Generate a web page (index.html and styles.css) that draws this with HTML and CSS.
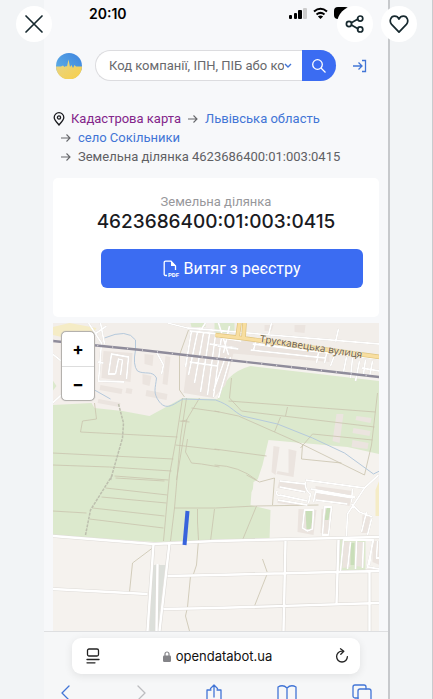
FILE: index.html
```html
<!DOCTYPE html>
<html lang="uk">
<head>
    <meta charset="UTF-8">
    <meta name="viewport" content="width=device-width, initial-scale=1.0">
    <title>Земельна ділянка 4623686400:01:003:0415</title>
    <link rel="stylesheet" href="styles.css">
</head>
<body>
<div class="viewer-actions">
    <button class="round-button" aria-label="Закрити">
        <svg width="20" height="20" viewBox="0 0 20 20"><path d="M2 2 18 18M18 2 2 18"/></svg>
    </button>
    <div class="viewer-right">
        <button class="round-button" aria-label="Поділитися">
            <svg width="20" height="20" viewBox="0 0 20 20"><path d="m6.4 8.8 6.6-3.7M6.4 11l6.6 3.8"/><circle cx="4" cy="10" r="2.6"/><circle cx="15.2" cy="4.6" r="2.6"/><circle cx="15.2" cy="15.4" r="2.6"/></svg>
        </button>
        <button class="round-button" aria-label="Зберегти">
            <svg width="20" height="20" viewBox="0 0 20 20"><path d="M10 18.2 2.6 10.4C-.2 7 1.8 2.2 5.6 2.2c2.200 0 3.600 1.200 4.400 2.900.8-1.700 2.200-2.900 4.400-2.900 3.800 0 5.800 4.800 3 8.200Z"/></svg>
        </button>
    </div>
</div>

<div class="phone">
    <div class="status-bar">
        <span class="time">20:10</span>
        <svg class="status-icons" width="60" height="12" viewBox="0 0 60 12">
            <rect x="0" y="8" width="3" height="4" rx="1"/>
            <rect x="5" y="6" width="3" height="6" rx="1"/>
            <rect x="9" y="3" width="4" height="9" rx="1"/>
            <rect class="faded" x="14" y="1" width="4" height="11" rx="1"/>
            <path class="wave" d="M25 4.500q6.500-5.500 13 0M27.500 7.500q4-3.300 8 0"/>
            <path d="m28.900 9.400 2.600 2.600 2.600-2.600q-2.600-1.900-5.200 0Z"/>
            <rect x="45" y="0" width="15" height="12" rx="4"/>
        </svg>
    </div>

    <header class="site-header">
        <a class="logo" href="#" aria-label="Opendatabot">
            <svg width="26" height="26" viewBox="0 0 26 26">
                <defs>
                    <linearGradient id="sky" x1="0" y1="1" x2="1" y2="0"><stop offset="0" stop-color="#64b6e6"/><stop offset="1" stop-color="#3d83df"/></linearGradient>
                    <linearGradient id="field" x1="0" y1="0" x2="1" y2="1"><stop offset="0" stop-color="#e5d58d"/><stop offset="1" stop-color="#f9cf47"/></linearGradient>
                </defs>
                <circle cx="13" cy="13" r="13" fill="url(#sky)"/>
                <path d="M0 13.500h5l2-1 1.500 1.500 1.500-1 1 .5 1.500-7 1.500 7.500 1.500-2 1.500 3 1.500-3 1.500 1.500H26a13 13 0 0 1-26 0Z" fill="url(#field)"/>
            </svg>
        </a>
        <form class="search">
            <input class="search-input" type="text" aria-label="Пошук" placeholder="Код компанії, ІПН, ПІБ або код">
            <svg class="chevron" width="8" height="6" viewBox="0 0 8 6"><path d="m1 1 3 3 3-3"/></svg>
            <button class="search-button" type="button" aria-label="Шукати">
                <svg width="16" height="16" viewBox="0 0 16 16"><circle cx="6.500" cy="6.500" r="4.800"/><path d="m10 10 4.500 4.500"/></svg>
            </button>
        </form>
        <a class="login" href="#" aria-label="Увійти">
            <svg width="16" height="14" viewBox="0 0 16 14"><path d="M1 7h9M6.500 3.500 10 7l-3.500 3.500M10 1.500h3.500v11H10"/></svg>
        </a>
    </header>

    <nav class="breadcrumbs" aria-label="Навігація">
        <div class="crumb-row">
            <svg class="pin" width="12" height="14" viewBox="0 0 12 14"><path d="M6 13C3.500 10 1.200 7.800 1.200 5.500a4.800 4.800 0 0 1 9.600 0C10.800 7.800 8.500 10 6 13Z"/><circle cx="6" cy="5.500" r="1.600"/></svg>
            <a class="visited" href="#">Кадастрова карта</a>
            <svg class="arrow" width="10" height="10" viewBox="0 0 10 10"><path d="M0 5h9M5.500 1.500 9 5 5.500 8.500"/></svg>
            <a href="#">Львівська область</a>
        </div>
        <div class="crumb-row nested">
            <svg class="arrow" width="10" height="10" viewBox="0 0 10 10"><path d="M0 5h9M5.500 1.500 9 5 5.500 8.500"/></svg>
            <a href="#">село Сокільники</a>
        </div>
        <div class="crumb-row nested">
            <svg class="arrow" width="10" height="10" viewBox="0 0 10 10"><path d="M0 5h9M5.500 1.500 9 5 5.500 8.500"/></svg>
            <span>Земельна ділянка 4623686400:01:003:0415</span>
        </div>
    </nav>

    <main>
        <section class="card">
            <p class="card-label">Земельна ділянка</p>
            <h1>4623686400:01:003:0415</h1>
            <button class="extract-button">
                <svg width="17" height="18" viewBox="0 0 17 18"><path class="sheet" d="M4 15.500H2.500A1.300 1.300 0 0 1 1.200 14V2.500A1.300 1.300 0 0 1 2.500 1.200H8L12.500 6v4"/><path class="fold" d="M8 1v5h5Z"/><text x="5" y="17">PDF</text></svg>
                Витяг з реєстру
            </button>
        </section>

        <section class="map">
            <svg class="map-canvas" viewBox="53 323 327 308" preserveAspectRatio="xMidYMid slice">
                <rect x="53" y="323" width="327" height="308" fill="#f5f2ee"/>
                <path d="M53 323H380V378L53 340Z" fill="#f2eeea"/>
                <path d="M53 340 190 356 183 398 150 416 95 408 53 405Z" fill="#f4efeb"/>
                <path d="M53 327 70 323 97 328 94 333 62 337 53 335Z" fill="#f5ecc6"/>

                <!-- fields -->
                <g fill="#dce9cd">
                    <path d="M53 405 92 403 95 408 123 411 150 416 183 398 218 399Q225 373 251 366L380 381V454L348 447 325 445 269 440 263 465 258 480 252 492 251 505 271 510 270 540 216 541 155 542 53 535Z"/>
                    <path d="M53 380 57 386 53 391ZM191 323H206V327H192ZM215 323H235V333H215Z"/>
                    <path d="M340 538H366V572L340 571Z"/>
                </g>
                <path d="M254 482 262 477 275 479 272 506 252 504Z" fill="#f5f2ee"/>

                <!-- built-up blocks -->
                <g fill="#ebe4df">
                    <path d="M104 351 133 353 131 382 102 378ZM145 354 154 355 153 366 145 364ZM166 356 171 357 168 385 163 384ZM101 385 123 389 122 394 100 390ZM127 388 133 389 132 394 126 393ZM147 390 168 394 167 400 146 396ZM99 399 121 403 120 407 98 403ZM143 374 152 376 150 386 143 384Z"/>
                    <path d="M192 331 220 333 214 398 184 393ZM220 334 238 337 226 385 214 398ZM265 325 274 325 272 331 265 331ZM295 325 306 325 305 333 295 332ZM218 338 258 342 330 352 330 362 216 352Z"/>
                    <path d="M337 414 344 414 340 443 333 441ZM357 416 372 418 371 423 356 420ZM354 428 371 431 370 436 353 433ZM353 440 369 443 368 449 352 447Z"/>
                    <path d="M274 446 280 447 276 475 272 472ZM289 449 297 451 294 477 277 474 278 471 289 473ZM280 480 307 484 306 493 278 488ZM316 486 353 491 350 506 316 500ZM299 509 317 510 314 535 298 532ZM322 509 333 510 330 534 321 533ZM363 515 371 517 368 533 362 533Z"/>
                    <path d="M343 542 351 541 351 567 343 568ZM357 542 364 542 364 567 356 566ZM373 541 380 541 380 565 373 562ZM278 499 300 503 299 506 278 503Z"/>
                </g>
                <path d="M306 511H313V520L311 529H307ZM327 508H331L329 520H325ZM351 543H355V565H351Z" fill="#c9deb9"/>
                <path d="M153 565 166 565 158 631H150Z" fill="#dcdfda"/>
                <path d="M376 490 380 480V516H376Z" fill="#f5ecc6"/>

                <!-- thin parcel borders and paths -->
                <g class="parcels">
                    <path d="M95 403 97 419 83 421 81 432 178 437M53 453 113 456 174 459M53 465 110 467 172 471M116 478 165 481"/>
                    <path d="M183 398 177 437 170 475 164 541M187 398 181 438 175 508 171 541M200 398 187 420 177 480M188 420 182 421M176 445 220 450"/>
                    <path d="M188 439 186 452 192 463 202 464 220 467M192 408 220 412M190 422 180 421M53 511 87 513"/>
                    <path d="M115 476 169 480M106 488 168 495M102 497 167 503M93 508 165 516M90 519 164 528"/>
                    <path d="M175 508 216 508 256 506 319 505M198 509 198 522 199 540 197 565 194 574M215 509 211 541M191 576 188 607 186 616 190 631"/>
                    <path d="M232 378 230 398 242 411 375 427M229 401 376 412M288 407 286 416M281 417 275 432M215 411 239 416 300 443 365 475 372 445 378 393M301 448 313 434 373 440M303 445 302 459 342 463M215 449 267 456M215 465Q240 466 257 480M247 475 260 482 275 478 273 505M257 506 243 540M263 559 268 573 255 606"/>
                    <path d="M153 548 133 563 130 592M189 330 180 355 180 390 185 397"/>
                </g>
                <path class="track" d="M119 404 124 423 123 438 111 480 M113 475 91 510 86 535"/>

                <!-- streams -->
                <path class="stream" d="M105 338Q128 328 136 340L136 350Q133 365 138 371C145 375 153 370 157 378 156 388 153 393 160 402 168 412 176 402 184 399L216 400C231 405 233 411 243 416L278 424 313 438 345 453 374 474 380 471M95 390 111 399"/>

                <!-- road casing then fill -->
                <g id="streets">
                    <path class="casing" d="M53 536 154 544 216 541 380 537M53 589 148 594M154 544 148 631M170 543 160 631M168 576 216 575 380 571M164 609 216 608 380 603M286 541 284 631M339 540 337 604M370 572 370 631M158 564 157 631"/>
                    <path class="street" d="M53 536 154 544 216 541 380 537M53 589 148 594M154 544 148 631M170 543 160 631M168 576 216 575 380 571M164 609 216 608 380 603M286 541 284 631M339 540 337 604M370 572 370 631M158 564 157 631"/>
                </g>
                <g class="lanes">
                    <path d="M89 323 102 343 99 381 125 382M101 323 105 344M94 335 107 326M116 374H109L112 354 129 357 127 379M116 374 119 359 123 360 121 375M98 362 104 363M157 352 164 365 162 374M53 354 63 362M53 403 65 392 96 397"/>
                    <path d="M192 331 186 367M198 332 189 375M204 333 195 383M210 334 201 392M216 335 208 395M222 337 214 397M190 331 238 336M190 362 218 366M231 357 219 398M226 357 214 391M210 344 237 348"/>
                    <path d="M168 323 188 328 380 344M202 329 206 323M219 323 229 355M230 326 224 353M218 337 242 341M218 346 239 349M253 344 380 359M251 350 326 358M257 339 254 350M259 344 320 352M272 323 269 335M339 329 336 342M320 347 317 363M328 349 325 363M337 350 331 366M347 357 344 372M353 358 351 378M360 361 356 381M366 360 364 374M373 361 370 377M380 371 362 368"/>
                    <path d="M280 481 306 484M280 487 306 492M280 495 308 501M278 491Q275 494 280 496M278 500 308 505M306 482Q305 490 311 494L309 503M314 502 316 492 354 498M306 480 365 488 379 475M311 489 356 497M316 500 348 504M353 489 352 502M365 488 348 514 347 536M352 504 360 512 373 517M367 512 362 532M372 519 368 535"/>
                    <path d="M305 510H314L313 529 308 531 303 528ZM325 507H332L329 535H323ZM341 571 344 540H374L368 567 380 569M351 542 348 569M357 541 356 569M364 542 363 568M373 541 370 565M378 541 377 558H380"/>
                </g>

                <!-- main road -->
                <path class="main-casing" d="M216 335 242 338 380 357M240 323 238 337M245 323 244 338"/>
                <path class="main-road" d="M216 335 242 338 380 357M240 323 238 337M245 323 244 338"/>

                <path class="railway" d="M53 341 92 345 142 350 220 359 300 368 380 377"/>
                <path class="sleepers" d="M53 341 92 345 142 350 220 359 300 368 380 377"/>

                <path class="selected" d="M188 511 185 545"/>
                <text class="road-label" transform="translate(260 342) rotate(9)">Трускавецька вулиця</text>
            </svg>
            <div class="zoom-control">
                <button class="zoom-button" aria-label="Наблизити">+</button>
                <button class="zoom-button" aria-label="Віддалити">−</button>
            </div>
        </section>
    </main>

    <footer class="browser-bar">
        <div class="address">
            <button class="plain" aria-label="Параметри сторінки">
                <svg width="14" height="16" viewBox="0 0 14 16"><rect x="1.500" y="1" width="11" height="7" rx="1.500"/><path d="M1 11.500h12M1 14.800h8"/></svg>
            </button>
            <span class="domain">
                <svg class="lock" width="8" height="11" viewBox="0 0 8 11"><rect x="0" y="4.500" width="8" height="6.500" rx="1.200"/><path d="M2 5V3a2 2 0 0 1 4 0v2"/></svg>
                opendatabot.ua
            </span>
            <button class="plain" aria-label="Оновити">
                <svg width="14" height="16" viewBox="0 0 14 16"><path d="M7 3.200A5.400 5.400 0 1 0 12.400 8.600M5.500 .8 8.800 3.300 5.800 6.200"/></svg>
            </button>
        </div>
        <div class="toolbar">
            <button class="plain" aria-label="Назад"><svg width="18" height="20" viewBox="0 0 18 20"><path d="M12 2 5 9l7 7"/></svg></button>
            <button class="plain disabled" aria-label="Вперед" disabled><svg width="18" height="20" viewBox="0 0 18 20"><path d="m8 2 7 7-7 7"/></svg></button>
            <button class="plain" aria-label="Надіслати"><svg width="18" height="20" viewBox="0 0 18 20"><path d="M7 6H3v13h14V6h-4M10 13V1M6.500 4.500 10 1l3.500 3.500"/></svg></button>
            <button class="plain" aria-label="Закладки"><svg width="20" height="20" viewBox="0 0 20 20"><path d="M10 4v14M10 4Q6 0 1 3v15q5-3 9 0 4-3 9 0V3q-5-3-9 1"/></svg></button>
            <button class="plain" aria-label="Вкладки"><svg width="20" height="20" viewBox="0 0 20 20"><path d="M6 14H3a2 2 0 0 1-2-2V3a2 2 0 0 1 2-2h9a2 2 0 0 1 2 2v2"/><rect x="6" y="5" width="13" height="13" rx="2"/></svg></button>
        </div>
    </footer>
</div>
</body>
</html>
```
FILE: styles.css
```css
* {
    box-sizing: border-box;
}
body {
    margin: 0;
    height: 100vh;
    overflow: hidden;
    position: relative;
    background-color: #f2f4f6;
    border-right: 1px solid #c9cbce;
    font-family: Roboto, "Liberation Sans", sans-serif;
    color: #1a1b1f;
}
button {
    padding: 0;
    border: 0;
    font-family: inherit;
    cursor: pointer;
}
svg {
    display: block;
    flex: none;
}
a {
    color: #4275d6;
    text-decoration: none;
}
.phone {
    display: flex;
    flex-direction: column;
    margin: 0 42px 0 44px;
    background-color: #f7f8fa;
    border-right: 2px solid #c7c9cc;
}

/* buttons floating over the page */
.viewer-actions {
    position: absolute;
    top: 6px;
    left: 16px;
    right: 15px;
    display: flex;
    justify-content: space-between;
}
.viewer-right {
    display: flex;
    gap: 8px;
}
.round-button {
    width: 36px;
    height: 36px;
    display: flex;
    align-items: center;
    justify-content: center;
    border-radius: 50%;
    background-color: white;
}
.round-button svg {
    fill: none;
    stroke: #17292f;
    stroke-width: 1.7;
    stroke-linecap: round;
    stroke-linejoin: round;
}

.status-bar {
    display: flex;
    justify-content: space-between;
    align-items: center;
    height: 26px;
    padding: 0 39px 0 45px;
}
.time {
    font-family: Inter, sans-serif;
    font-size: 14px;
    font-weight: 600;
    color: black;
}
.faded {
    fill: #ccc;
}
.wave {
    fill: none;
    stroke: black;
    stroke-width: 2;
}

.site-header {
    display: flex;
    align-items: center;
    height: 31px;
    margin-top: 24px;
    padding: 0 20px 0 12px;
}
.search {
    display: flex;
    flex: 1;
    min-width: 0;
    height: 31px;
    align-items: center;
    margin: 0 16px 0 13px;
    border: 1px solid #dcdcdf;
    border-right: 0;
    border-radius: 16px;
    background-color: white;
}
.search-input {
    flex: 1;
    min-width: 0;
    height: 29px;
    padding: 0 0 0 13px;
    border: 0;
    background: none;
    font-family: inherit;
    font-size: 13px;
    outline: none;
}
.search-input::placeholder {
    color: #68696d;
}
.chevron {
    margin-right: 10px;
    fill: none;
    stroke: #4275d6;
    stroke-width: 1.4;
}
.search-button {
    width: 34px;
    height: 31px;
    display: flex;
    align-items: center;
    justify-content: center;
    border-radius: 0 16px 16px 0;
    background-color: #3b6cf2;
}
.search-button svg {
    fill: none;
    stroke: white;
    stroke-width: 1.3;
}
.login svg {
    fill: none;
    stroke: #4275d6;
    stroke-width: 1.3;
}

.breadcrumbs {
    margin: 28px 9px 12px 9px;
    font-size: 13px;
    line-height: 19px;
    color: #5f6064;
}
.crumb-row {
    display: flex;
    align-items: center;
    gap: 7px;
    white-space: nowrap;
}
.nested {
    padding-left: 8px;
}
.pin {
    margin-right: -1px;
    fill: none;
    stroke: #1a1b1f;
    stroke-width: 1.3;
}
.arrow {
    fill: none;
    stroke: #66676b;
    stroke-width: 1.1;
}
.visited {
    color: #83258a;
}

main {
    margin: 0 9px;
}
.card {
    height: 139px;
    padding: 15px 16px 0;
    margin-bottom: 6px;
    border-radius: 5px;
    background-color: white;
    text-align: center;
}
.card-label {
    margin: 0;
    font-size: 13px;
    line-height: 18px;
    color: #97979b;
}
h1 {
    margin: 0 0 16px;
    font-family: Inter, sans-serif;
    font-size: 19px;
    line-height: 22px;
    font-weight: 500;
}
.extract-button {
    display: flex;
    align-items: center;
    justify-content: center;
    gap: 3px;
    width: calc(100% - 32px);
    height: 39px;
    margin-left: 32px;
    border-radius: 6px;
    background-color: #3b6cf2;
    color: white;
    font-size: 16px;
}
.sheet {
    fill: none;
    stroke: white;
    stroke-width: 1.3;
}
.fold {
    fill: white;
}
.extract-button text {
    fill: white;
    font-size: 6px;
    font-weight: 700;
}

.map {
    position: relative;
}
.map-canvas {
    width: 100%;
    height: 308px;
}
.map-canvas path {
    stroke-linejoin: round;
}
.parcels path {
    fill: none;
    stroke: #c9c3ad;
    stroke-width: 0.8;
}
.track {
    fill: none;
    stroke: #bdbfae;
    stroke-width: 1.5;
    stroke-dasharray: 3 1;
}
.stream {
    fill: none;
    stroke: #b5c9dc;
    stroke-width: 1;
}
.casing {
    fill: none;
    stroke: #dedbd7;
    stroke-width: 3.6;
}
.street {
    fill: none;
    stroke: white;
    stroke-width: 2.4;
}
.lanes path {
    fill: none;
    stroke: white;
    stroke-width: 1.8;
    filter: drop-shadow(0 0 0.5px #c9c4bf);
}
.main-casing {
    fill: none;
    stroke: #dfc47f;
    stroke-width: 4.6;
}
.main-road {
    fill: none;
    stroke: #f8dea0;
    stroke-width: 3.2;
}
.railway {
    fill: none;
    stroke: #8f8c9b;
    stroke-width: 2.4;
}
.sleepers {
    fill: none;
    stroke: #ddd9dd;
    stroke-width: 1.4;
    stroke-dasharray: 1 14;
}
.selected {
    fill: none;
    stroke: #3864dc;
    stroke-width: 4;
}
.road-label {
    fill: #665847;
    stroke: #f7ecd2;
    stroke-width: 1;
    paint-order: stroke;
    font-family: "Open Sans", sans-serif;
    font-size: 10px;
}
.zoom-control {
    position: absolute;
    top: 8px;
    left: 8px;
    border: 1px solid #b4b1ad;
    border-radius: 5px;
    background-color: white;
    box-shadow: 0 0 1px #aaa;
}
.zoom-button {
    display: block;
    width: 32px;
    height: 34px;
    background: none;
    font-family: Inter, sans-serif;
    font-size: 17px;
    font-weight: 700;
    line-height: 34px;
    color: black;
}
.zoom-button + .zoom-button {
    border-top: 1px solid #ddd;
}

.browser-bar {
    padding: 6px 28px 0;
    border-top: 1px solid #dedfe1;
    background-color: #f6f7f8;
}
.address {
    display: flex;
    align-items: center;
    justify-content: space-between;
    height: 36px;
    padding: 0 11px 0 14px;
    border-radius: 9px;
    background-color: white;
    box-shadow: 0 2px 9px rgba(0, 0, 0, 0.09);
}
.domain {
    display: flex;
    align-items: center;
    gap: 5px;
    font-family: Inter, sans-serif;
    font-size: 13px;
    color: #111;
}
.plain {
    background: none;
}
.plain svg {
    fill: none;
    stroke: #222;
    stroke-width: 1.3;
    stroke-linecap: round;
}
.plain svg path {
    stroke-linejoin: round;
}
.lock {
    fill: #848488;
}
.lock path {
    fill: none;
    stroke: #848488;
    stroke-width: 1.2;
}
.toolbar {
    display: flex;
    justify-content: space-between;
    margin: 10px -12px 0 -15px;
}
.toolbar svg {
    stroke: #4275d6;
}
.toolbar .disabled svg {
    stroke: #bcbdc0;
}
```
